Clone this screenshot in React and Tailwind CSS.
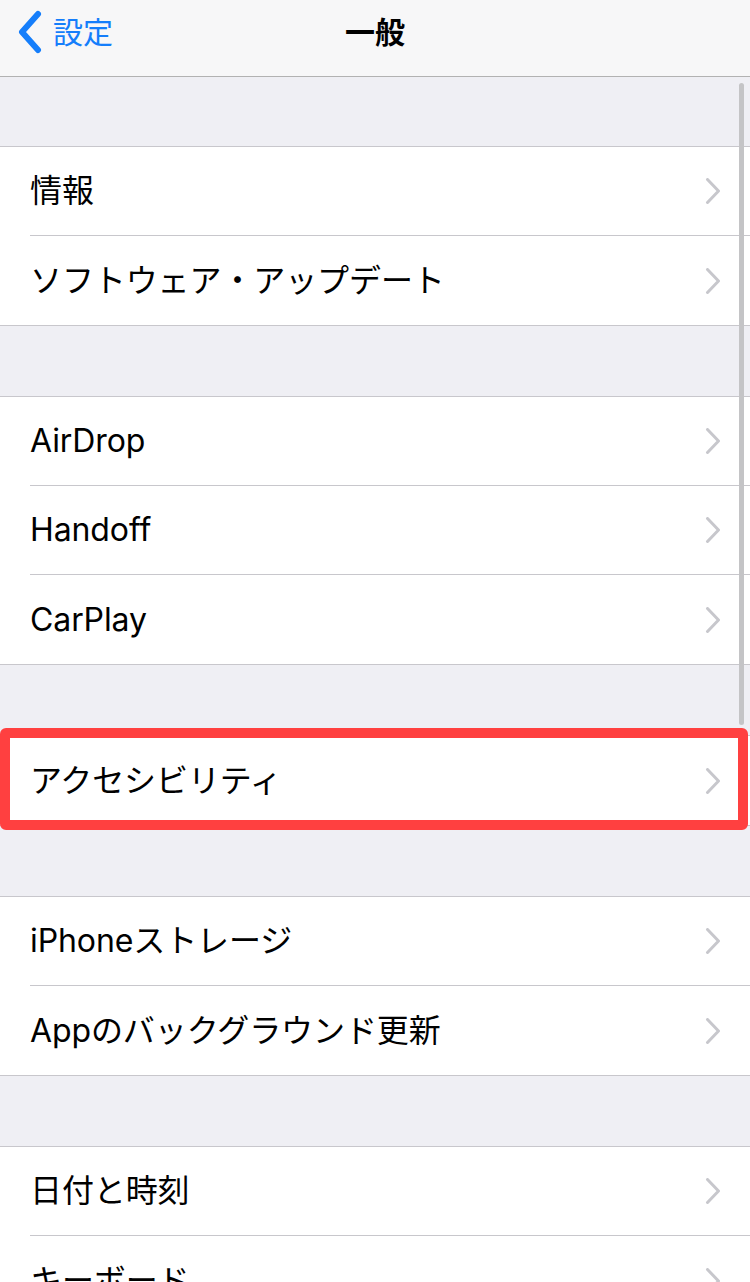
import React from "react";

const font = { fontFamily: '"Inter", "Noto Sans CJK JP", sans-serif' };

function Chevron() {
  return (
    <svg width="16" height="26" viewBox="0 0 16 26" className="shrink-0">
      <path d="M2.5 1.5 L13.5 13 L2.5 24.5" fill="none" stroke="#c7c7cc" strokeWidth="3" strokeLinecap="round" strokeLinejoin="round" />
    </svg>
  );
}

function Row({ label, last }) {
  return (
    <div className="bg-white pl-[30px]">
      <div className={"h-[89px] flex items-center justify-between pr-[29px] " + (last ? "" : "border-b border-[#c8c7cc]")}>
        <span className="text-[32px] text-black tracking-[-0.1px]" style={font}>{label}</span>
        <Chevron />
      </div>
    </div>
  );
}

function Group({ items }) {
  return (
    <div className="border-t border-b border-[#c8c7cc] bg-white">
      {items.map((it, i) => (
        <Row key={it} label={it} last={i === items.length - 1} />
      ))}
    </div>
  );
}

function Gap() {
  return <div className="h-[70px]" />;
}

export default function App() {
  return (
    <div className="relative w-[750px] h-[1282px] overflow-hidden bg-[#efeff4]" style={font}>
      <div className="h-[77px] bg-[#f7f7f8] border-b border-[#b2b2b2] relative flex items-center justify-center">
        <div className="absolute left-[16px] top-0 h-[64px] flex items-center gap-[9px]">
          <svg width="28" height="44" viewBox="0 0 28 44">
            <path d="M22 4 L6 22 L22 40" fill="none" stroke="#157efb" strokeWidth="6" strokeLinecap="round" strokeLinejoin="round" />
          </svg>
          <span className="text-[30px] text-[#157efb] leading-none">設定</span>
        </div>
        <span className="text-[30px] font-bold text-black leading-none -mt-[12px]">一般</span>
      </div>
      <div className="h-[69px]" />
      <Group items={["情報", "ソフトウェア・アップデート"]} />
      <Gap />
      <Group items={["AirDrop", "Handoff", "CarPlay"]} />
      <Gap />
      <div className="relative">
        <Group items={["アクセシビリティ"]} />
        <div className="absolute left-0 right-[2px] top-[-7px] h-[102px] border-[10px] border-[#ff4040] rounded-[6px]" />
      </div>
      <Gap />
      <Group items={["iPhoneストレージ", "Appのバックグラウンド更新"]} />
      <Gap />
      <Group items={["日付と時刻", "キーボード"]} />
      <div className="absolute left-[739px] top-[83px] w-[5px] h-[642px] rounded-full bg-[#c4c4c6]" />
    </div>
  );
}
